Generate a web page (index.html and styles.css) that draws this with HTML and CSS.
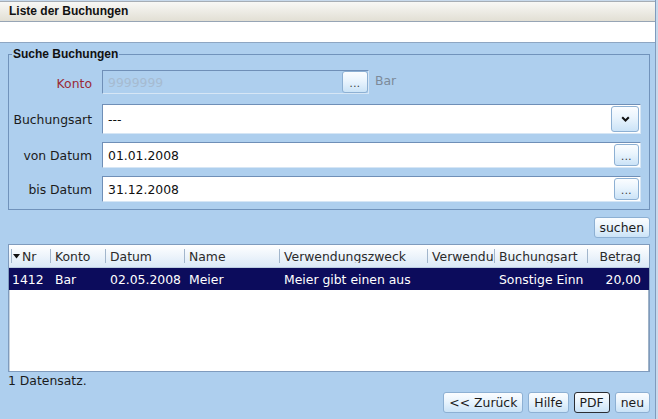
FILE: index.html
```html
<!DOCTYPE html>
<html lang="de">
<head>
<meta charset="utf-8">
<title>Liste der Buchungen</title>
<link rel="stylesheet" href="styles.css">
</head>
<body>
<div class="app">
  <div class="titlebar">Liste der Buchungen</div>
  <div class="subbar"></div>
  <div class="panel">
    <fieldset class="search">
      <legend>Suche Buchungen</legend>
      <div class="form">
        <label class="lbl lbl-req">Konto</label>
        <div class="konto-line">
          <div class="field field-disabled field-konto">
            <span class="field-text">9999999</span>
            <button class="btn btn-dots">...</button>
          </div>
          <span class="konto-name">Bar</span>
        </div>

        <label class="lbl">Buchungsart</label>
        <div class="field field-combo">
          <span class="field-text">---</span>
          <button class="btn btn-combo"><svg width="9" height="6" viewBox="0 0 9 6"><path d="M1.2 1.2 L4.5 4.5 L7.8 1.2" fill="none" stroke="#111" stroke-width="2"/></svg></button>
        </div>

        <label class="lbl">von Datum</label>
        <div class="field field-date">
          <span class="field-text">01.01.2008</span>
          <button class="btn btn-dots btn-date">...</button>
        </div>

        <label class="lbl">bis Datum</label>
        <div class="field field-date">
          <span class="field-text">31.12.2008</span>
          <button class="btn btn-dots btn-date">...</button>
        </div>
      </div>
    </fieldset>

    <div class="search-actions">
      <button class="btn btn-text">suchen</button>
    </div>

    <div class="table">
      <div class="thead">
        <div class="th th-first"><svg class="sort" width="7" height="5" viewBox="0 0 7 5"><path d="M0 0 H7 L3.5 4.5 Z" fill="#111"/></svg>Nr</div>
        <div class="th">Konto</div>
        <div class="th">Datum</div>
        <div class="th">Name</div>
        <div class="th">Verwendungszweck</div>
        <div class="th">Verwendungszweck</div>
        <div class="th">Buchungsart</div>
        <div class="th th-num">Betrag</div>
      </div>
      <div class="tr tr-selected">
        <div class="td td-first">1412</div>
        <div class="td">Bar</div>
        <div class="td">02.05.2008</div>
        <div class="td">Meier</div>
        <div class="td">Meier gibt einen aus</div>
        <div class="td"></div>
        <div class="td td-clip">Sonstige Einnahmen</div>
        <div class="td td-num">20,00</div>
      </div>
    </div>

    <div class="count">1 Datensatz.</div>

    <div class="footer">
      <button class="btn btn-text">&lt;&lt; Zurück</button>
      <button class="btn btn-text">Hilfe</button>
      <button class="btn btn-text btn-focus">PDF</button>
      <button class="btn btn-text">neu</button>
    </div>
  </div>
</div>
</body>
</html>
```

FILE: styles.css
```css
* { box-sizing: border-box; }

html, body {
  margin: 0;
  padding: 0;
}

body {
  width: 658px;
  height: 419px;
  overflow: hidden;
  background: #c7d9ec;
  font-family: "DejaVu Sans", sans-serif;
  font-size: 12.4px;
  color: #1b1b1b;
}

.app {
  width: 656px;
  height: 419px;
  border-right: 1px solid #7f9bbd;
  display: flex;
  flex-direction: column;
}

.titlebar {
  margin-top: 1px;
  height: 21px;
  border-top: 1px solid #a6adb5;
  border-bottom: 1px solid #97a5b5;
  padding-left: 9px;
  font: bold 12px/19px "Liberation Sans", Arial, sans-serif;
  color: #111;
  background: linear-gradient(#f8f8f6, #e2dfd4);
}

.subbar {
  height: 21px;
  background: #fff;
  border-bottom: 1px solid #8ea6c2;
}

.panel {
  flex: 1;
  background: #aecfee;
  padding: 4px 5px 0 8px;
  display: flex;
  flex-direction: column;
}

/* ---------- search group ---------- */
.search {
  margin: 0;
  padding: 9px 8px 7px 0;
  border: 1px solid #7193bb;
  min-width: 0;
}

.search legend {
  margin-left: 3px;
  padding: 0 1px;
  font: bold 12px/14px "Liberation Sans", Arial, sans-serif;
  color: #111;
}

.form {
  display: grid;
  grid-template-columns: 83px 1fr;
  grid-template-rows: 26px 30px 26px 26px;
  column-gap: 10px;
  row-gap: 8px;
}

.lbl {
  align-self: center;
  text-align: right;
  color: #1b1b1b;
  white-space: nowrap;
}

.lbl-req { color: #9a2a36; }

.konto-line {
  display: flex;
  align-items: flex-start;
}

.field {
  display: flex;
  align-items: center;
  background: #fff;
  border: 1px solid;
  border-color: #6f8fb7 #d6e6f5 #d6e6f5 #6f8fb7;
  padding: 0 1px 0 5px;
  color: #111;
}

.field-text {
  flex: 1;
  white-space: nowrap;
  overflow: hidden;
}

.field-disabled {
  background: transparent;
  color: #a6bbd1;
}

.field-konto {
  width: 267px;
  height: 24px;
  padding-right: 0;
}

.konto-name {
  margin-left: 6px;
  line-height: 22px;
  color: #7c8a99;
}

/* ---------- buttons ---------- */
.btn {
  font-family: "DejaVu Sans", sans-serif;
  font-size: 12.4px;
  color: #1b1b1b;
  background: linear-gradient(#fbfdff 0%, #e9f4fd 45%, #cbe3f7 100%);
  border: 1px solid #8db0d3;
  border-radius: 3px;
  margin: 0;
  padding: 0 5px;
  cursor: pointer;
}

.btn-dots {
  width: 26px;
  height: 22px;
  padding: 4px 0 0;
  font-size: 10px;
  line-height: 1;
  letter-spacing: 0.5px;
  color: #333;
}

.btn-date {
  width: 25px;
  height: 22px;
  align-self: flex-end;
  margin-bottom: 1px;
}

.btn-combo {
  width: 28px;
  height: 26px;
  padding: 0;
  display: flex;
  align-items: center;
  justify-content: center;
}

.btn-text {
  height: 21px;
  line-height: 19px;
}

.btn-focus {
  border-color: #2a2d33;
}

.search-actions {
  margin-top: 7px;
  display: flex;
  justify-content: flex-end;
}

/* ---------- table ---------- */
.table {
  margin-top: 6px;
  height: 128px;
  background: #fff;
  border: 1px solid #7f9bbd;
  box-shadow: inset 1px 0 0 #c9d4df, inset -1px 0 0 #9fb3c8;
  display: flex;
  flex-direction: column;
}

.thead,
.tr {
  display: grid;
  grid-template-columns: 41px 55px 79px 95px 148px 67px 93px 1fr;
}

.thead {
  height: 23px;
  background: linear-gradient(#ffffff, #dbe9f7);
  border-bottom: 1px solid #bccde0;
  color: #2a2a2a;
}

.th {
  margin: 4px 0;
  border-left: 1px solid #a2b6cc;
  padding-left: 4px;
  display: flex;
  align-items: center;
  white-space: nowrap;
  overflow: hidden;
}

.th-first {
  margin-left: 2px;
  padding-left: 1px;
  gap: 1px;
}

.th-first .sort { margin-right: 1px; }

.th-num,
.td-num {
  justify-content: flex-end;
  padding-right: 8px;
}

.tr {
  height: 22px;
}

.tr-selected {
  background: #0c0c5c;
  color: #fff;
}

.td {
  padding-left: 5px;
  display: flex;
  align-items: center;
  white-space: nowrap;
  overflow: hidden;
}

.td-first { padding-left: 3px; }

.td-clip { margin-right: 3px; }

.count {
  margin-top: 1px;
  line-height: 15px;
  color: #1b1b1b;
}

.footer {
  margin-top: 4px;
  display: flex;
  justify-content: flex-end;
  gap: 5px;
}
```
